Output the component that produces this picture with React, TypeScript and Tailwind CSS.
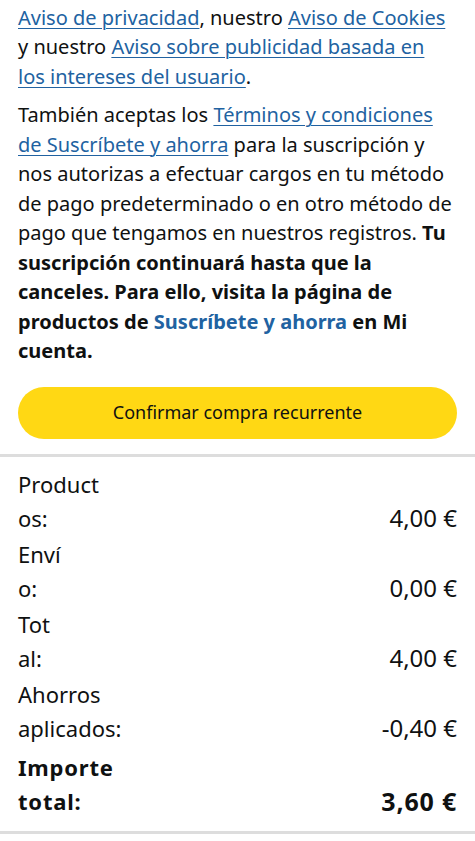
const link = 'text-[#2162a1] underline decoration-1 underline-offset-[3px]'

type Row = { label: [string, string]; value: string; bold?: boolean }

const rows: Row[] = [
  { label: ['Product', 'os:'], value: '4,00 €' },
  { label: ['Enví', 'o:'], value: '0,00 €' },
  { label: ['Tot', 'al:'], value: '4,00 €' },
  { label: ['Ahorros', 'aplicados:'], value: '-0,40 €' },
  { label: ['Importe', 'total:'], value: '3,60 €', bold: true },
]

export default function App() {
  return (
    <div className="min-h-screen overflow-hidden bg-white text-[#0f1111] font-['Noto_Sans',sans-serif]">
      <div className="px-[18px] text-[20px] leading-[29.5px] -mt-[27px]">
        <p>
          <span className="whitespace-nowrap">Consulta el texto legal y nuestro</span>
          <br />
          <a className={link}>Aviso de privacidad</a>, nuestro <a className={link}>Aviso de Cookies</a>
          <br />
          y nuestro <a className={link}>Aviso sobre publicidad basada en</a>
          <br />
          <a className={link}>los intereses del usuario</a>.
        </p>
        <p className="mt-[9px]">
          También aceptas los <a className={link}>Términos y condiciones</a>
          <br />
          <a className={link}>de Suscríbete y ahorra</a> para la suscripción y
          <br />
          nos autorizas a efectuar cargos en tu método
          <br />
          de pago predeterminado o en otro método de
          <br />
          pago que tengamos en nuestros registros. <b className="font-bold">Tu</b>
          <br />
          <b className="font-bold">
            suscripción continuará hasta que la
            <br />
            canceles. Para ello, visita la página de
            <br />
            productos de <a className="text-[#2162a1]">Suscríbete y ahorra</a> en Mi
            <br />
            cuenta.
          </b>
        </p>
      </div>

      <div className="px-[18px] pt-[21px] pb-[15px]">
        <button className="flex h-[52px] w-full items-center justify-center rounded-full bg-[#ffd814] text-[18px] text-[#0f1111]">
          Confirmar compra recurrente
        </button>
      </div>

      <div className="h-[3px] bg-[#dddddd]" />

      <div className="flex flex-col gap-[2px] px-[18px] pt-[10px] pb-[13px] text-[22px] leading-[34px]">
        {rows.map((r) => (
          <div
            key={r.value + r.label[0]}
            className={
              r.bold
                ? 'mt-[3px] flex items-end justify-between font-bold tracking-[0.8px]'
                : 'flex items-end justify-between'
            }
          >
            <div>
              {r.label[0]}
              <br />
              {r.label[1]}
            </div>
            <div className={r.bold ? 'text-[25px]' : 'text-[24px]'}>{r.value}</div>
          </div>
        ))}
      </div>

      <div className="h-[3px] bg-[#dddddd]" />
    </div>
  )
}
